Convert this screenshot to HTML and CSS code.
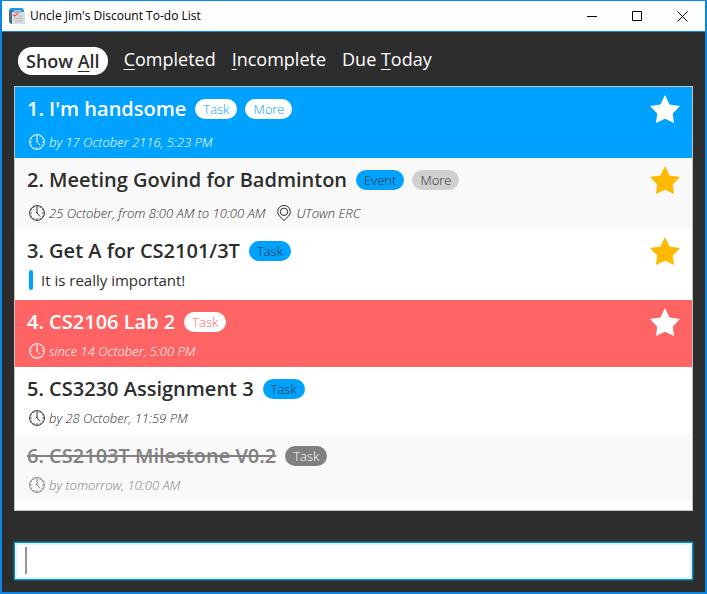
FILE: index.html
```html
<!DOCTYPE html>
<html lang="en">
<head>
<meta charset="utf-8">
<title>Uncle Jim's Discount To-do List</title>
<link rel="stylesheet" href="styles.css">
</head>
<body>
<svg class="defs" aria-hidden="true">
  <symbol id="clock" viewBox="0 0 16 16">
    <circle cx="8" cy="8" r="7.4" fill="none" stroke="currentColor" stroke-width="1"/>
    <path d="M8 1v2M8 13v2M1 8h2M13 8h2M11.5 1.9l-.7 1.2M14.1 4.5l-1.2.7M14.1 11.5l-1.2-.7M11.5 14.1l-.7-1.2M4.5 14.1l.7-1.2M1.9 11.5l1.2-.7M1.9 4.5l1.2.7M4.5 1.9l.7 1.2" fill="none" stroke="currentColor" stroke-width=".7"/>
    <path d="M8 2.500v5.500l3.200 3.500M8 8l-1-1" fill="none" stroke="currentColor" stroke-width="1"/>
  </symbol>
  <symbol id="pin" viewBox="0 0 16 16">
    <path d="M8 15.500L3.200 10.800A6.300 6.300 0 1 1 12.800 10.800Z" fill="none" stroke="currentColor" stroke-width="1"/>
    <circle cx="8" cy="6.800" r="3.700" fill="none" stroke="currentColor" stroke-width="1"/>
  </symbol>
  <symbol id="star" viewBox="0 0 30 28">
    <path d="M15 0l4.600 9.600L30 11l-7.200 7.400L24 28l-9-4.200L6 28l1.200-9.600L0 11l10.400-1.400z" fill="currentColor"/>
  </symbol>
</svg>

<header class="titlebar">
  <svg class="app-icon" viewBox="0 0 16 16" aria-hidden="true">
    <path d="M2 0h11l2 2v3H0V2z" fill="#129cf0"/>
    <path d="M0 3l4-1v14H2l-2-2z" fill="#4a6f86"/>
    <path d="M3 4h12l1 1v11H3z" fill="#d9dde0"/>
    <path d="M5 2h7v3H5z" fill="#a9b6be"/>
    <path d="M4 7l2 1 3-3" fill="none" stroke="#e45459" stroke-width="1.200"/>
    <path d="M9 8h5M6 10.500h8M6 13h8" stroke="#b4babe" stroke-width="1"/>
  </svg>
  <h1 class="app-title">Uncle Jim's Discount To-do List</h1>
  <div class="controls">
    <button class="control" aria-label="Minimize"><svg viewBox="0 0 11 11"><path d="M0 5.500h10"/></svg></button>
    <button class="control" aria-label="Maximize"><svg viewBox="0 0 11 11"><path d="M.5.5h9v9h-9z"/></svg></button>
    <button class="control" aria-label="Close"><svg viewBox="0 0 11 11"><path d="M.5.5l10 10M10.500.5l-10 10"/></svg></button>
  </div>
</header>

<main class="content">
  <nav class="tabs">
    <a class="tab tab-active" href="#all">Show <u>A</u>ll</a>
    <a class="tab" href="#completed"><u>C</u>ompleted</a>
    <a class="tab" href="#incomplete"><u>I</u>ncomplete</a>
    <a class="tab" href="#today">Due <u>T</u>oday</a>
  </nav>

  <ul class="list">
    <li class="item item-selected item-tall">
      <div class="heading"><h2>1. I'm handsome</h2><span class="tag">Task</span><span class="tag">More</span></div>
      <div class="meta"><svg class="icon"><use href="#clock"/></svg><span>by 17 October 2116, 5:23 PM</span></div>
      <svg class="star"><use href="#star"/></svg>
    </li>
    <li class="item item-alt item-tall">
      <div class="heading"><h2>2. Meeting Govind for Badminton</h2><span class="tag">Event</span><span class="tag tag-more">More</span></div>
      <div class="meta"><svg class="icon"><use href="#clock"/></svg><span>25 October, from 8:00 AM to 10:00 AM</span><svg class="icon icon-next"><use href="#pin"/></svg><span>UTown ERC</span></div>
      <svg class="star"><use href="#star"/></svg>
    </li>
    <li class="item item-note">
      <div class="heading"><h2>3. Get A for CS2101/3T</h2><span class="tag">Task</span></div>
      <p class="note">It is really important!</p>
      <svg class="star"><use href="#star"/></svg>
    </li>
    <li class="item item-overdue">
      <div class="heading"><h2>4. CS2106 Lab 2</h2><span class="tag">Task</span></div>
      <div class="meta"><svg class="icon"><use href="#clock"/></svg><span>since 14 October, 5:00 PM</span></div>
      <svg class="star"><use href="#star"/></svg>
    </li>
    <li class="item">
      <div class="heading"><h2>5. CS3230 Assignment 3</h2><span class="tag">Task</span></div>
      <div class="meta"><svg class="icon"><use href="#clock"/></svg><span>by 28 October, 11:59 PM</span></div>
    </li>
    <li class="item item-alt item-done">
      <div class="heading"><h2>6. CS2103T Milestone V0.2</h2><span class="tag">Task</span></div>
      <div class="meta"><svg class="icon"><use href="#clock"/></svg><span>by tomorrow, 10:00 AM</span></div>
    </li>
  </ul>

  <div class="command">
    <input class="command-input" type="text" aria-label="Command">
  </div>
</main>
</body>
</html>
```
FILE: styles.css
```css
* {
  box-sizing: border-box;
}

body {
  display: flex;
  flex-direction: column;
  min-height: 100vh;
  margin: 0;
  border: 2px solid #0a86e4;
  border-top-width: 1px;
  background: #2d2d2d;
  color: #2d2d2d;
  font-family: "Open Sans", "Noto Sans", sans-serif;
}

h1,
h2,
p,
ul {
  margin: 0;
  padding: 0;
}

.defs {
  display: none;
}

.titlebar {
  display: flex;
  align-items: center;
  height: 31px;
  padding-left: 7px;
  border-bottom: 1px solid #0a86e4;
  background: #fff;
  color: #000;
}

.app-icon {
  width: 16px;
  height: 16px;
  margin-right: 5px;
}

.app-title {
  font-size: 12px;
  font-weight: 400;
  line-height: 16px;
}

.controls {
  display: flex;
  align-self: stretch;
  margin-left: auto;
}

.control {
  display: flex;
  align-items: center;
  justify-content: center;
  width: 45px;
  padding: 0;
  border: 0;
  background: none;
}

.control svg {
  width: 11px;
  height: 11px;
  fill: none;
  stroke: #000;
}

.content {
  display: flex;
  flex: 1;
  flex-direction: column;
  padding: 15px 12px 12px;
}

.tabs {
  display: flex;
  gap: 16px;
  height: 28px;
  margin: 0 4px 11px;
}

.tab {
  color: #fff;
  font-size: 18px;
  font-weight: 400;
  line-height: 25px;
  text-decoration: none;
}

.tab u {
  text-decoration-thickness: 1px;
  text-underline-offset: 3px;
}

.tab-active {
  padding: 0 8px;
  border-radius: 14px;
  background: #fff;
  color: #2d2d2d;
  font-weight: 600;
  line-height: 28px;
}

.list {
  flex: 1;
  border: 1px solid #c4c4c4;
  background: #fff;
  list-style: none;
}

.item {
  position: relative;
  padding: 7px 12px 6px;
  background: #fff;
  --accent: #00a2ff;
}

.heading {
  display: flex;
  align-items: center;
  gap: 8px;
  height: 30px;
}

.heading h2 {
  margin-right: 1px;
  font-size: 20px;
  font-weight: 600;
  line-height: 30px;
  white-space: nowrap;
}

.tag {
  padding: 0 8px;
  border-radius: 10px;
  background: var(--accent);
  font-size: 13px;
  font-weight: 300;
  line-height: 20px;
}

.tag-more {
  background: #d0d0d0;
}

.meta {
  display: flex;
  align-items: center;
  height: 20px;
  margin-top: 4px;
  padding-left: 2px;
  font-size: 13px;
  font-style: italic;
  font-weight: 300;
}

.icon {
  width: 16px;
  height: 16px;
  margin-right: 4px;
}

.icon-next {
  margin-left: 11px;
}

.star {
  position: absolute;
  top: 8px;
  right: 12px;
  width: 30px;
  height: 28px;
  color: #ffb900;
}

.item-tall .meta {
  margin-top: 8px;
}

.item-alt {
  background: #f9f9f9;
}

.item-note {
  padding-bottom: 10px;
}

.note {
  position: relative;
  margin: 4px 0 0 2px;
  padding-left: 12px;
  font-size: 15px;
  line-height: 20px;
}

.note::before {
  content: "";
  position: absolute;
  inset: 0 auto 0 0;
  width: 4px;
  border-radius: 2px;
  background: #00a2ff;
}

.item-selected,
.item-overdue {
  background: var(--accent);
  color: #fff;
}

.item-overdue {
  --accent: #ff6464;
}

.item-selected .tag,
.item-overdue .tag {
  background: #fff;
  color: var(--accent);
}

.item-selected .star,
.item-overdue .star {
  color: #fff;
}

.item-done {
  color: #808080;
}

.item-done h2 {
  text-decoration: line-through;
  text-decoration-thickness: 2px;
}

.item-done .tag {
  background: #808080;
  color: #fff;
}

.command {
  position: relative;
  margin-top: 31px;
}

.command::before {
  content: "";
  position: absolute;
  top: 5px;
  left: 11px;
  width: 2px;
  height: 27px;
  background: #969696;
}

.command-input {
  display: block;
  width: 100%;
  height: 38px;
  padding: 0 11px;
  border: 1px solid #0093c4;
  border-radius: 0;
  outline: 0;
  background: #fff;
  box-shadow: 0 0 2px #039ed3, inset 0 0 0 2px #e2f2fa;
  font: inherit;
  font-size: 18px;
}
```
